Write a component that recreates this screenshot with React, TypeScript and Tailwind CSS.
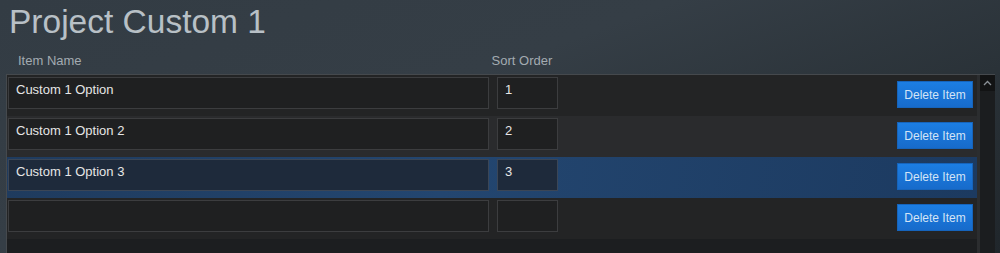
const rows = [
  { name: "Custom 1 Option", order: "1", tone: "odd" },
  { name: "Custom 1 Option 2", order: "2", tone: "even" },
  { name: "Custom 1 Option 3", order: "3", tone: "selected" },
  { name: "", order: "", tone: "odd" },
];

function Row({ name, order, tone }: { name: string; order: string; tone: string }) {
  const selected = tone === "selected";
  const rowBg =
    tone === "selected"
      ? "bg-[linear-gradient(100deg,#1f3b5e_0%,#234670_45%,#1c3a60_100%)]"
      : tone === "even"
        ? "bg-[#2a2b2d]"
        : "bg-[#232425]";
  const boxBg = selected ? "bg-[#1e2a3b] border-[#3b4656]" : "bg-[#1f2021] border-[#3c3d3f]";
  return (
    <div className={`flex h-[41px] items-start pl-[1px] pr-[4px] ${rowBg}`}>
      <div className={`mt-[2px] h-[32px] w-[481px] border px-[7px] pt-[4px] text-[13px] leading-[16px] text-[#e6e6e6] ${boxBg}`}>
        {name}
      </div>
      <div className={`ml-[8px] mt-[2px] h-[32px] w-[61px] border px-[7px] pt-[4px] text-[13px] leading-[16px] text-[#e6e6e6] ${boxBg}`}>
        {order}
      </div>
      <button className="ml-auto mt-[6px] h-[27px] w-[76px] border border-[#1664bb] bg-[linear-gradient(180deg,#1c7ee3,#176bcb)] text-[12px] text-[#d3e4f6]">
        Delete Item
      </button>
    </div>
  );
}

export default function App() {
  return (
    <div
      className="h-[253px] w-[1000px] overflow-hidden bg-[linear-gradient(160deg,#333c44_0%,#353e46_40%,#2a3238_70%,#20262b_100%)] text-[#b9c1c7]"
      style={{ fontFamily: '"Liberation Sans", Arial, sans-serif' }}
    >
      <h1 className="pl-[9px] pt-[2px] text-[33.5px] leading-[40px] text-[#b8c0c6]">Project Custom 1</h1>
      <div className="flex pt-[11px] text-[13px] leading-[16px] text-[#a3abb1]">
        <span className="pl-[18px]">Item Name</span>
        <span className="ml-[410px]">Sort Order</span>
      </div>
      <div className="ml-[6px] mt-[5px] flex h-[200px] w-[989px] border-l border-t border-[#45494d] bg-[#1c1e20]">
        <div className="flex-1">
          {rows.map((r, i) => (
            <Row key={i} {...r} />
          ))}
        </div>
        <div className="w-[18px] border-l-[3px] border-[#2b2d2f] bg-[#1b1d1f]">
          <div className="flex h-[16px] items-center justify-center bg-[#121314] text-[#8a9096]">
            <svg width="9" height="6" viewBox="0 0 9 6">
              <path d="M1 5 L4.5 1.5 L8 5" fill="none" stroke="currentColor" strokeWidth="1.3" />
            </svg>
          </div>
        </div>
      </div>
    </div>
  );
}
